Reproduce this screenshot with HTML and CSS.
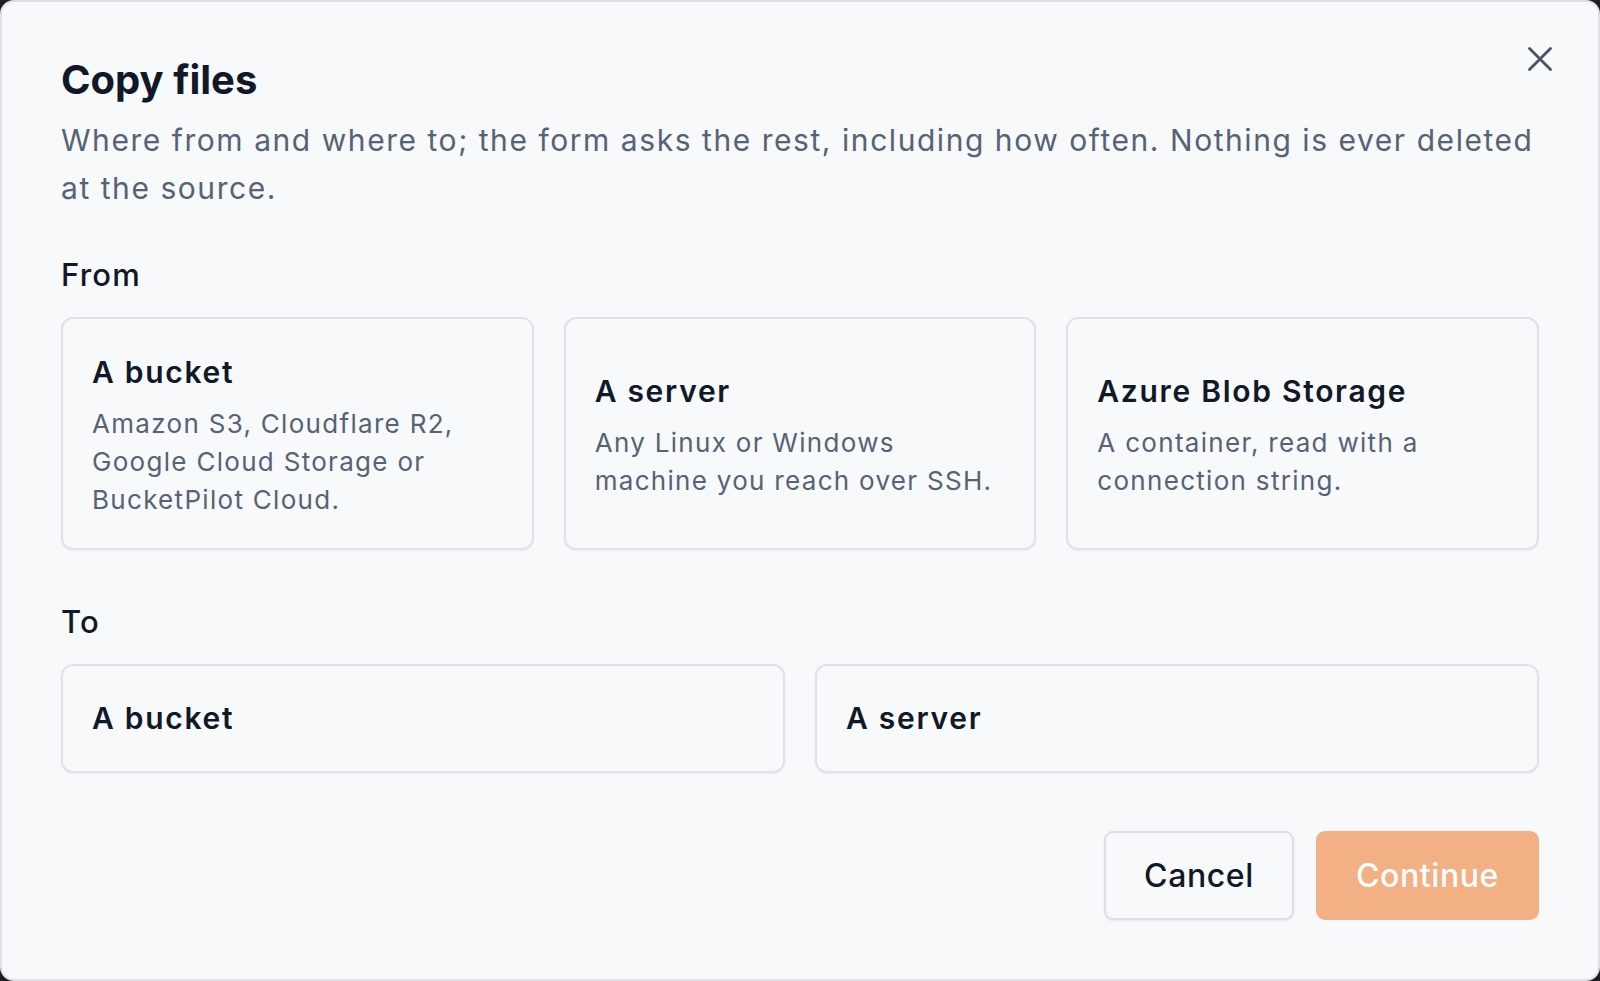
FILE: index.html
```html
<!DOCTYPE html>
<html lang="en">
<head>
  <meta charset="UTF-8">
  <title>Copy files</title>
  <link rel="stylesheet" href="styles.css">
</head>
<body>

  <div class="dialog" role="dialog" aria-labelledby="dialog-title">
    <button class="close" type="button" aria-label="Close">
      <svg width="36" height="36" viewBox="0 0 24 24" fill="none" stroke="currentColor" stroke-width="1.9" stroke-linecap="round">
        <path d="M5 5l14 14M19 5L5 19"/>
      </svg>
    </button>

    <h2 id="dialog-title">Copy files</h2>
    <p class="intro">Where from and where to; the form asks the rest, including how often. Nothing is ever deleted at the source.</p>

    <div class="section">
      <div class="section-label">From</div>
      <div class="options options-3">
        <button class="option" type="button">
          <span class="option-title">A bucket</span>
          <span class="option-desc">Amazon S3, Cloudflare R2, Google Cloud Storage or BucketPilot Cloud.</span>
        </button>
        <button class="option" type="button">
          <span class="option-title">A server</span>
          <span class="option-desc">Any Linux or Windows machine you reach over SSH.</span>
        </button>
        <button class="option" type="button">
          <span class="option-title">Azure Blob Storage</span>
          <span class="option-desc">A container, read with a connection string.</span>
        </button>
      </div>
    </div>

    <div class="section">
      <div class="section-label">To</div>
      <div class="options options-2">
        <button class="option" type="button">
          <span class="option-title">A bucket</span>
        </button>
        <button class="option" type="button">
          <span class="option-title">A server</span>
        </button>
      </div>
    </div>

    <div class="actions">
      <button class="btn btn-secondary" type="button">Cancel</button>
      <button class="btn btn-primary" type="button" disabled>Continue</button>
    </div>
  </div>

</body>
</html>
```

FILE: styles.css
```css
* {
  box-sizing: border-box;
}

body {
  margin: 0;
  background: #1c1d20;
  font-family: Inter, "Noto Sans", sans-serif;
}

.dialog {
  position: relative;
  width: 1600px;
  height: 981px;
  padding: 54px 59px 0;
  background: #f8f9fb;
  border: 2px solid #dde1e6;
  border-radius: 14px;
  color: #111827;
}

.close {
  position: absolute;
  top: 39px;
  right: 40px;
  padding: 0;
  border: none;
  background: none;
  color: #4b5563;
  cursor: pointer;
}

.close svg {
  display: block;
}

h2 {
  margin: 0;
  font-size: 40px;
  line-height: 48px;
  font-weight: 700;
}

.intro {
  margin: 12px 0 0;
  font-size: 30px;
  line-height: 48px;
  letter-spacing: 1.55px;
  color: #566276;
}

.section {
  margin-top: 40px;
}

.section + .section {
  margin-top: 49px;
}

.section-label {
  font-size: 31px;
  line-height: 45px;
  font-weight: 500;
  letter-spacing: 1.2px;
  margin-bottom: 20px;
}

.options {
  display: grid;
  gap: 30px;
}

.options-3 {
  grid-template-columns: repeat(3, 1fr);
}

.options-2 {
  grid-template-columns: repeat(2, 1fr);
}

.option {
  display: flex;
  flex-direction: column;
  justify-content: center;
  gap: 13px;
  padding: 34px 29px 29px;
  text-align: left;
  font-family: inherit;
  background: #f8f9fb;
  border: 2px solid #dfe2e7;
  border-radius: 12px;
  box-shadow: 0 1px 2px rgba(16, 24, 40, 0.05);
  cursor: pointer;
}

.options-2 .option {
  padding: 33px 29px 33px;
}

.option-title {
  font-size: 30px;
  line-height: 39px;
  font-weight: 600;
  letter-spacing: 1.7px;
  color: #111827;
}

.option-desc {
  font-size: 26px;
  line-height: 38px;
  letter-spacing: 1.3px;
  color: #566276;
}

.actions {
  display: flex;
  justify-content: flex-end;
  gap: 22px;
  margin-top: 58px;
}

.btn {
  height: 89px;
  padding: 0 38px;
  font-family: inherit;
  font-size: 32px;
  font-weight: 500;
  letter-spacing: 0.6px;
  border-radius: 9px;
  cursor: pointer;
}

.btn-secondary {
  background: #f8f9fb;
  color: #111827;
  border: 2px solid #dcdfe4;
  box-shadow: 0 1px 3px rgba(16, 24, 40, 0.08);
}

.btn-primary {
  background: #f3b084;
  color: #fff;
  border: 2px solid #f3b084;
}
```
